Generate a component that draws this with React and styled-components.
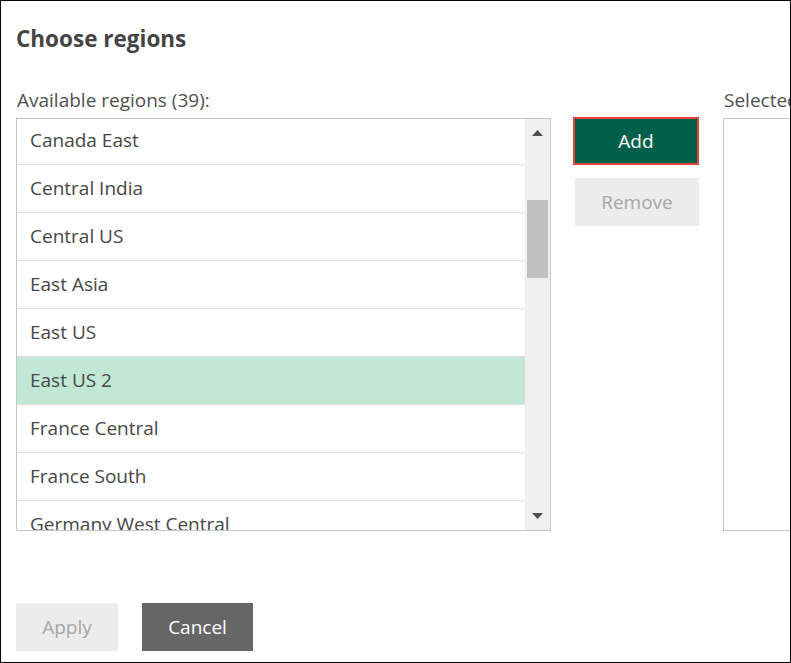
import React from "react";
import styled, { createGlobalStyle } from "styled-components";

const regions = [
  "Canada East",
  "Central India",
  "Central US",
  "East Asia",
  "East US",
  "East US 2",
  "France Central",
  "France South",
  "Germany West Central",
];

function App() {
  return (
    <>
      <GlobalStyle />
      <Dialog>
        <Title>Choose regions</Title>
        <Columns>
          <Column>
            <Label>Available regions (39):</Label>
            <ListBox>
              <Items>
                {regions.map((name) => (
                  <Item key={name} selected={name === "East US 2"}>
                    {name}
                  </Item>
                ))}
              </Items>
              <Scrollbar>
                <Arrow>
                  <svg width="11" height="6" viewBox="0 0 11 6">
                    <path d="M5.5 0L11 6H0z" fill="#505050" />
                  </svg>
                </Arrow>
                <Track>
                  <Thumb />
                </Track>
                <Arrow>
                  <svg width="11" height="6" viewBox="0 0 11 6">
                    <path d="M0 0h11L5.5 6z" fill="#505050" />
                  </svg>
                </Arrow>
              </Scrollbar>
            </ListBox>
          </Column>
          <ButtonColumn>
            <AddButton>Add</AddButton>
            <MoveButton disabled>Remove</MoveButton>
          </ButtonColumn>
          <Column>
            <Label>Selected regions (0):</Label>
            <EmptyBox />
          </Column>
        </Columns>
        <Footer>
          <FooterButton disabled width={102}>
            Apply
          </FooterButton>
          <FooterButton primary width={111}>
            Cancel
          </FooterButton>
        </Footer>
      </Dialog>
    </>
  );
}

export default App;

const GlobalStyle = createGlobalStyle`
  html, body {
    margin: 0;
    padding: 0;
    background: #fff;
  }
  body {
    font-family: "Open Sans", "Noto Sans", sans-serif;
    color: #444;
  }
`;

const Dialog = styled.div`
  box-sizing: border-box;
  width: 791px;
  height: 663px;
  border: 1px solid #000;
  padding: 22px 0 0 15px;
  overflow: hidden;
  display: flex;
  flex-direction: column;
`;

const Title = styled.h1`
  margin: 0;
  font-size: 22.5px;
  line-height: 32px;
  font-weight: 700;
  color: #444;
`;

const Columns = styled.div`
  display: flex;
  margin-top: 33px;
`;

const Column = styled.div`
  display: flex;
  flex-direction: column;
  flex-shrink: 0;
`;

const Label = styled.div`
  font-size: 19px;
  line-height: 24px;
  color: #505050;
  margin-left: 1px;
  margin-bottom: 6px;
  white-space: nowrap;
`;

const ListBox = styled.div`
  box-sizing: border-box;
  width: 535px;
  height: 413px;
  border: 1px solid #c6c6c6;
  display: flex;
  overflow: hidden;
`;

const Items = styled.div`
  flex: 1;
  overflow: hidden;
  & > div:first-child {
    margin-top: -2px;
  }
`;

const Item = styled.div`
  box-sizing: border-box;
  height: 48px;
  padding: 0 0 2px 13px;
  display: flex;
  align-items: center;
  font-size: 19px;
  color: #474747;
  white-space: nowrap;
  border-bottom: 1px solid #dedede;
  background: ${(p) => (p.selected ? "#c1e7d6" : "#fff")};
`;

const Scrollbar = styled.div`
  width: 25px;
  background: #f0f0f0;
  display: flex;
  flex-direction: column;
  align-items: center;
`;

const Arrow = styled.div`
  height: 28px;
  display: flex;
  align-items: center;
  justify-content: center;
  svg {
    display: block;
  }
`;

const Track = styled.div`
  flex: 1;
  width: 100%;
  padding-top: 53px;
  display: flex;
  justify-content: center;
`;

const Thumb = styled.div`
  width: 21px;
  height: 78px;
  background: #c1c1c1;
`;

const ButtonColumn = styled.div`
  display: flex;
  flex-direction: column;
  align-items: flex-start;
  padding-top: 29px;
  margin: 0 24px 0 22px;
  gap: 13px;
  flex-shrink: 0;
`;

const AddButton = styled.button`
  box-sizing: border-box;
  width: 126px;
  height: 48px;
  border: 2px solid #e0453f;
  background: #00604b;
  color: #fff;
  font-family: inherit;
  font-size: 19px;
  cursor: pointer;
`;

const MoveButton = styled.button`
  box-sizing: border-box;
  width: 124px;
  height: 48px;
  margin-left: 2px;
  border: none;
  background: #ececec;
  color: #a6a6a6;
  font-family: inherit;
  font-size: 19px;
`;

const EmptyBox = styled.div`
  box-sizing: border-box;
  width: 400px;
  height: 413px;
  border: 1px solid #c6c6c6;
`;

const Footer = styled.div`
  display: flex;
  gap: 24px;
  margin-top: 72px;
`;

const FooterButton = styled.button`
  width: ${(p) => p.width}px;
  height: 48px;
  padding: 0;
  border: none;
  font-family: inherit;
  font-size: 19px;
  background: ${(p) => (p.primary ? "#666666" : "#ececec")};
  color: ${(p) => (p.primary ? "#fff" : "#a6a6a6")};
  cursor: pointer;
`;
